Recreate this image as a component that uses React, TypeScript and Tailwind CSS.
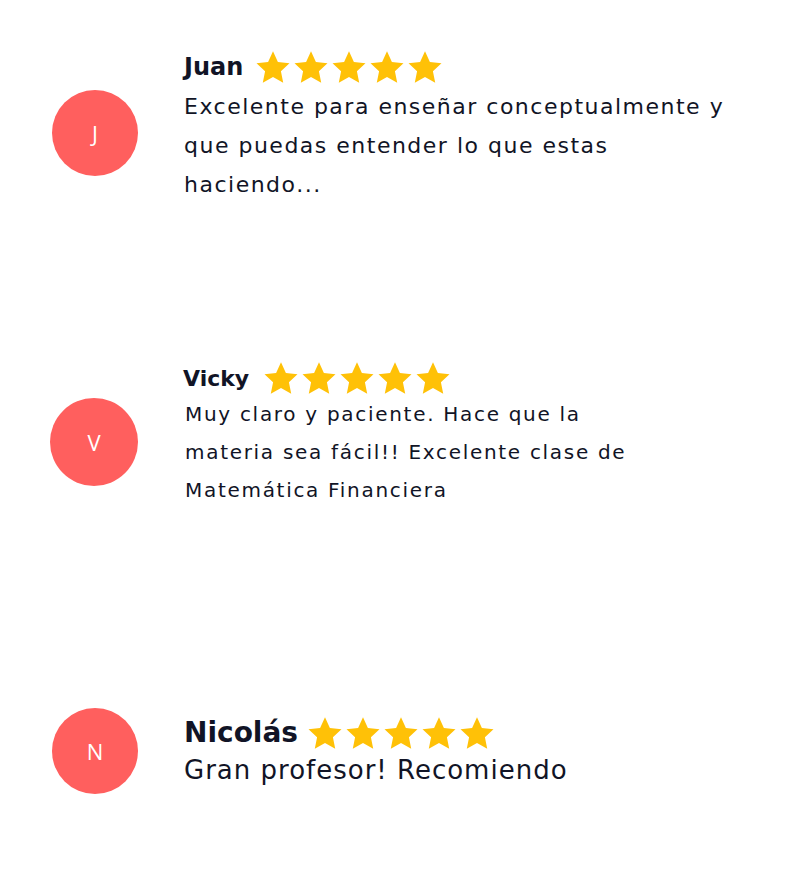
function StarRow() {
  return (
    <div className="flex gap-[4px]">
      {[0, 1, 2, 3, 4].map((i) => (
        <svg key={i} viewBox="1.6 1.6 20.8 19.9" className="w-[34px] h-[32px]">
          <path
            d="M12 1.8l3.05 6.6 7.2.85-5.33 4.93 1.43 7.12L12 17.7l-6.35 3.6 1.43-7.12L1.75 9.25l7.2-.85z"
            fill="#FFC107"
          />
        </svg>
      ))}
    </div>
  );
}

function Avatar({ letter, className }: { letter: string; className?: string }) {
  return (
    <div
      className={`rounded-full bg-[#FF5F5E] flex items-center justify-center text-white text-[22px] font-['Open_Sans',sans-serif] shrink-0 ${className ?? ""}`}
    >
      {letter}
    </div>
  );
}

export default function App() {
  return (
    <div className="min-h-[888px] w-[799px] bg-white pt-[50px] pl-[52px] text-[#111426] font-['DejaVu_Sans',sans-serif]">
      {/* Juan */}
      <div className="flex items-start gap-[46px]">
        <Avatar letter="J" className="w-[86px] h-[86px] mt-[40px]" />
        <div>
          <div className="flex items-center h-[34px]">
            <span className="text-[24px] font-bold mr-[13px]">Juan</span>
            <StarRow />
          </div>
          <p className="mt-[3px] text-[22px] leading-[39px] tracking-[1.5px] whitespace-nowrap">
            Excelente para enseñar conceptualmente y
            <br />
            que puedas entender lo que estas
            <br />
            haciendo...
          </p>
        </div>
      </div>

      {/* Vicky */}
      <div className="flex items-start gap-[46px] mt-[157px] -ml-[2px]">
        <Avatar letter="V" className="w-[88px] h-[88px] mt-[37px]" />
        <div>
          <div className="flex items-center h-[34px] -ml-[1px]">
            <span className="text-[22px] font-bold mr-[15px]">Vicky</span>
            <StarRow />
          </div>
          <p className="text-[20px] leading-[38px] tracking-[1.7px] whitespace-nowrap ml-[1px]">
            Muy claro y paciente. Hace que la
            <br />
            materia sea fácil!! Excelente clase de
            <br />
            Matemática Financiera
          </p>
        </div>
      </div>

      {/* Nicolás */}
      <div className="flex items-start gap-[46px] mt-[199px]">
        <Avatar letter="N" className="w-[86px] h-[86px]" />
        <div className="mt-[8px]">
          <div className="flex items-center h-[34px]">
            <span className="text-[28px] font-bold mr-[10px]">Nicolás</span>
            <StarRow />
          </div>
          <p className="text-[26px] leading-[36px] tracking-[1px] mt-[2px]">Gran profesor! Recomiendo</p>
        </div>
      </div>
    </div>
  );
}
